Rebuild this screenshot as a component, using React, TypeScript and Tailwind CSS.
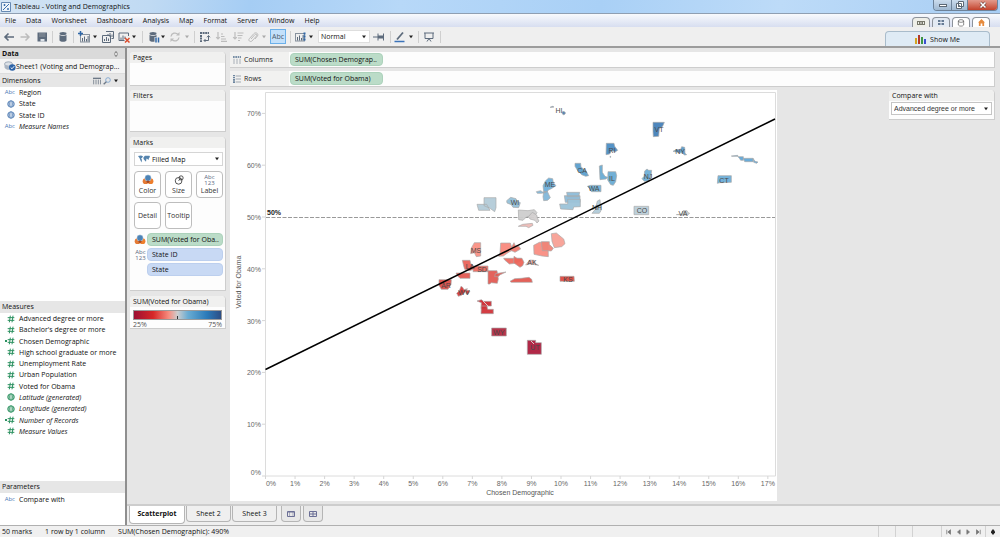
import type { ReactNode } from "react";
import clsx from "clsx";

type FieldIcon = "abc" | "globe" | "hash" | "calcHash";

interface Field {
  name: string;
  icon: FieldIcon;
  generated?: boolean;
}

const menus = ["File", "Data", "Worksheet", "Dashboard", "Analysis", "Map", "Format", "Server", "Window", "Help"];

const dimensions: Field[] = [
  { name: "Region", icon: "abc" },
  { name: "State", icon: "globe" },
  { name: "State ID", icon: "globe" },
  { name: "Measure Names", icon: "abc", generated: true },
];

const measures: Field[] = [
  { name: "Advanced degree or more", icon: "hash" },
  { name: "Bachelor's degree or more", icon: "hash" },
  { name: "Chosen Demographic", icon: "calcHash" },
  { name: "High school graduate or more", icon: "hash" },
  { name: "Unemployment Rate", icon: "hash" },
  { name: "Urban Population", icon: "hash" },
  { name: "Voted for Obama", icon: "hash" },
  { name: "Latitude (generated)", icon: "globe", generated: true },
  { name: "Longitude (generated)", icon: "globe", generated: true },
  { name: "Number of Records", icon: "calcHash", generated: true },
  { name: "Measure Values", icon: "hash", generated: true },
];

function Caret({ dim }: { dim?: boolean }) {
  return (
    <svg viewBox="0 0 6 4" className={clsx("h-1 w-1.5 shrink-0", dim ? "text-[#aaa]" : "text-[#222]")}>
      <path d="M1 .5h4L3 3.2z" fill="currentColor" />
    </svg>
  );
}

function Separator({ className }: { className: string }) {
  return (
    <span className={clsx("flex items-center justify-center", className)}>
      <span className="h-3 w-px bg-[#cfcfcf]" />
    </span>
  );
}

function Tool({ label, className, dim, children }: { label: string; className: string; dim?: boolean; children: ReactNode }) {
  return (
    <button type="button" aria-label={label} className={clsx("flex items-center justify-center", dim ? "text-[#bcbcbc]" : "text-[#5d6b7c]", className)}>
      {children}
    </button>
  );
}

function DropTool({ label, dim }: { label: string; dim?: boolean }) {
  return (
    <button type="button" aria-label={label} className="flex w-1.5 items-center justify-center">
      <Caret dim={dim} />
    </button>
  );
}

function Glyph({ children, className = "size-3" }: { children: ReactNode; className?: string }) {
  return (
    <svg viewBox="0 0 12 12" className={clsx("shrink-0", className)} fill="none" stroke="currentColor">
      {children}
    </svg>
  );
}

function Cylinder() {
  return (
    <g stroke="none" fill="currentColor">
      <ellipse cx="6" cy="2.6" rx="3.5" ry="1.5" />
      <path d="M2.5 3.8c1 1.4 6 1.4 7 0v5.6c-1 1.8-6 1.8-7 0z" />
    </g>
  );
}

function Bars() {
  return (
    <g stroke="none" fill="currentColor">
      <path d="M1 2h10v8.500H1zM2 3v6.500h8V3z" fillRule="evenodd" opacity=".7" />
      <path d="M3 6h1v3.500H3zM5 4.500h1v5H5zM7 7h1v2.500H7zM8.600 4h1v5.500h-1z" />
    </g>
  );
}

function Toolbar() {
  return (
    <div className="flex h-[19px] shrink-0 items-stretch justify-between border-b-2 border-[#9c9c9c] bg-[#efefef] pl-px box-content">
      <div className="flex items-stretch">
        <Tool label="Back" className="w-4">
          <Glyph><path d="M11 6H2M5.500 2.500 2 6l3.500 3.500" strokeWidth="1.600" /></Glyph>
        </Tool>
        <Tool label="Forward" className="w-4" dim>
          <Glyph><path d="M1.500 6h8.500M6.500 2.500 10 6 6.500 9.500" strokeWidth="1.500" /></Glyph>
        </Tool>
        <Tool label="Save" className="w-[18px]">
          <Glyph>
            <path d="M1.500 1.500h9.500v9H1.500z" fill="currentColor" stroke="none" />
            <path d="M3 2h6.500v4H3z" fill="#76818e" stroke="none" />
            <path d="M4.500 8h4v2.500h-4z" fill="#dde2e8" stroke="none" />
          </Glyph>
        </Tool>
        <Separator className="w-[3px]" />
        <Tool label="Connect to data" className="w-[18px]"><Glyph><Cylinder /></Glyph></Tool>
        <Separator className="w-[3px]" />
        <Tool label="New worksheet" className="w-[17px]">
          <Glyph className="h-3 w-3.5">
            <g transform="translate(1 1)"><Bars /></g>
            <path d="M0 2.500h5M2.500 0v5" stroke="#2f67a8" strokeWidth="1.500" />
          </Glyph>
        </Tool>
        <DropTool label="New worksheet options" />
        <Tool label="Duplicate sheet" className="w-[19px]">
          <Glyph>
            <path d="M4 .5h7.500v7H9.500M6 5V3M8 6V2M10 6V3.500" />
            <path d="M.5 4.500h8v7h-8zM2.500 10V8M4.500 10V6M6.500 10V7.500" />
          </Glyph>
        </Tool>
        <Tool label="Clear sheet" className="w-3.5">
          <Glyph>
            <path d="M10.500 5V2H1v7.500h5.500M3 9V6.500M5 9V4.500M7 8V5.500" />
            <path d="m7 7 4.500 4.500M11.500 7 7 11.500" stroke="#d94a2b" strokeWidth="1.500" />
          </Glyph>
        </Tool>
        <DropTool label="Clear options" />
        <Separator className="w-[11px]" />
        <Tool label="Pause auto updates" className="w-3">
          <Glyph>
            <g transform="translate(-1 0)"><Cylinder /></g>
            <path d="M6.500 6h5v6h-5z" fill="#efefef" stroke="none" />
            <path d="M8 6.500v5M10.500 6.500v5" stroke="#2f67a8" strokeWidth="1.500" />
          </Glyph>
        </Tool>
        <DropTool label="Update options" />
        <Tool label="Run update" className="w-[18px]" dim>
          <Glyph>
            <path d="M2 5.500a4 4 0 0 1 7-2M10 6.500a4 4 0 0 1-7 2" strokeWidth="1.300" />
            <path d="M10.500 1v3.500H7zM1.500 11V7.500H5z" fill="currentColor" stroke="none" />
          </Glyph>
        </Tool>
        <DropTool label="Run options" dim />
        <Separator className="w-2" />
        <Tool label="Swap rows and columns" className="w-3.5">
          <Glyph>
            <path d="M1 2h9M2 4v7" strokeWidth="2" strokeDasharray="2 .6" />
            <path d="M9.500 5v4.500H5M8 6.300l1.500-1.800L11 6.300M6.500 8 5 9.500 6.500 11" />
          </Glyph>
        </Tool>
        <Tool label="Sort ascending" className="w-[18px]" dim>
          <Glyph><path d="M3 1v7M1.200 6.200 3 8l1.800-1.800M6 3h2M6 5.500h3.500M6 8h5M6 10.300h6" strokeWidth="1.200" /></Glyph>
        </Tool>
        <Tool label="Sort descending" className="w-4" dim>
          <Glyph><path d="M3 1v7M1.200 6.200 3 8l1.800-1.800M5.500 2h6M5.500 4.500h5M6 7h3.500M6 9.500h2" strokeWidth="1.200" /></Glyph>
        </Tool>
        <Tool label="Group" className="w-3.5" dim>
          <Glyph><path d="m4 8 4-4.500c1-1 2.500.2 1.600 1.400L5 10C3.400 11.500.8 9.500 2.300 7.700l4.500-5C8.600.7 12 2.500 10.500 5L8 8" /></Glyph>
        </Tool>
        <span className="flex w-2 items-center justify-center"><Caret dim /></span>
        <button type="button" aria-pressed="true" className="mx-0.5 my-0.5 flex w-4 items-center justify-center border border-[#6bb0ea] bg-[#c3e0fa] text-[#4c5a6b]">
          Abc
        </button>
        <Separator className="w-1" />
        <Tool label="View cards" className="w-4">
          <Glyph className="h-3 w-3.5">
            <Bars />
            <path d="M10.500 1.500v9" stroke="#2f67a8" strokeWidth="2" strokeDasharray="2 1" />
          </Glyph>
        </Tool>
        <DropTool label="View card options" />
        <SelectBox label="Fit" value="Normal" className="my-[3px] ml-1 w-[52px] border-[#dedede]" />
        <Tool label="Fix axes" className="w-[18px]">
          <Glyph><path d="M0 6h5M5 2.500v7M10.500 2.500v7" /><path d="M5 4.500h5.500v3H5z" fill="currentColor" stroke="none" /></Glyph>
        </Tool>
        <Separator className="w-1" />
        <Tool label="Highlight" className="w-4">
          <Glyph><path d="m3 8.500 6-7" strokeWidth="1.800" /><path d="M.5 10.500h10" stroke="#3b73b9" strokeWidth="1.500" /></Glyph>
        </Tool>
        <DropTool label="Highlight options" />
        <Separator className="w-2" />
        <Tool label="Presentation mode" className="w-3.5">
          <Glyph><path d="M1 2h10M2 2v5.500h8V2M4 10.500l2-3 2 3" /></Glyph>
        </Tool>
        <Separator className="w-2" />
      </div>
      <button type="button" className="mr-2.5 mt-1 flex w-[105px] items-center justify-center gap-1 rounded-t-sm border border-b-0 border-[#a9bccb] bg-[#dfebf5]">
        <svg viewBox="0 0 11 9" className="h-[9px] w-[11px]">
          <path d="M0 3h2v6H0z" fill="#d3a521" />
          <path d="M3 0h2v9H3z" fill="#b5392a" />
          <path d="M6 2h2v7H6z" fill="#3c9446" />
          <path d="M9 4h2v5H9z" fill="#3b4fd0" />
        </svg>
        Show Me
      </button>
    </div>
  );
}

function SelectBox({ label, value, className, icon }: { label: string; value: string; className?: string; icon?: ReactNode }) {
  return (
    <span className={clsx("relative flex items-center border bg-white", className)}>
      {icon}
      <select aria-label={label} defaultValue={value} className="h-full w-full appearance-none bg-transparent pl-0.5 leading-[11px] outline-none">
        <option>{value}</option>
      </select>
      <span className="pointer-events-none absolute inset-y-0 right-0.5 flex items-center"><Caret /></span>
    </span>
  );
}

function TypeIcon({ icon }: { icon: FieldIcon }) {
  if (icon === "abc") return <span className="text-[6px] text-[#4a78b5]">Abc</span>;
  if (icon === "globe") {
    return (
      <Glyph className="size-2">
        <circle cx="6" cy="6" r="4.800" strokeWidth="1.500" />
        <path d="M1 4.500h10M1 7.500h10" strokeWidth="1" />
        <ellipse cx="6" cy="6" rx="2.200" ry="4.800" strokeWidth="1" />
      </Glyph>
    );
  }
  return (
    <span className="flex items-center">
      {icon === "calcHash" && <span className="size-0.5 bg-current" />}
      <Glyph className="size-2">
        <path d="M1 4h10M1 8h10M5 1 3.500 11M9 1 7.500 11" strokeWidth="1.500" />
      </Glyph>
    </span>
  );
}

function FieldList({ fields, measure, className }: { fields: Field[]; measure?: boolean; className?: string }) {
  return (
    <ul className={clsx("flex flex-col", className)}>
      {fields.map((f) => (
        <li key={f.name} className="flex flex-1 items-center gap-1">
          <span className={clsx("flex w-[15px] shrink-0 justify-end", measure ? "text-[#2c9160]" : "text-[#5580b5]")}>
            <TypeIcon icon={f.icon} />
          </span>
          <span className={clsx("whitespace-nowrap", f.generated && "italic")}>{f.name}</span>
        </li>
      ))}
    </ul>
  );
}

function DataPane() {
  return (
    <aside className="flex w-[127px] shrink-0 flex-col border-r-2 border-[#8f8f8f] bg-white">
      <div className="flex h-[11px] items-center justify-between bg-[#dadada] pl-0.5 pr-1.5 font-bold">
        Data
        <Glyph className="size-1.5"><path d="M3 5 6 1l3 4M3 7l3 4 3-4" /></Glyph>
      </div>
      <div className="flex h-[15px] items-center border-b border-[#ddd] bg-[#f4f4f4] pl-1">
        <svg viewBox="0 0 12 10" className="h-2.5 w-3 shrink-0">
          <ellipse cx="4.500" cy="3" rx="4" ry="2.200" fill="#dce1e7" stroke="#8391a3" strokeWidth=".7" />
          <path d="M.5 3v3.500c1 2 3 2.500 5 2.300V5.200C3 5.600 1 4.500.5 3z" fill="#a9b4c2" />
          <circle cx="8.300" cy="6.500" r="3.300" fill="#2b62a7" />
          <path d="m6.700 6.500 1.300 1.300 2.200-2.600" fill="none" stroke="#fff" strokeWidth=".9" />
        </svg>
        <span className="whitespace-nowrap">Sheet1 (Voting and Demograp...</span>
      </div>
      <div className="flex h-[13px] items-center bg-[#e6e6e6] pl-0.5 pr-1.5">
        <span className="flex-1">Dimensions</span>
        <span className="flex items-center gap-0.5 text-[#6d7886]">
          <Glyph className="size-2"><path d="M0 2h12" strokeWidth="2" /><path d="M1 4v7M4.500 4v7M8 4v7M11.300 4v7" strokeWidth="1.200" /></Glyph>
          <Glyph className="size-2"><circle cx="7.500" cy="4.500" r="3.500" stroke="#5d91c8" /><path d="m5 7-4 4" strokeWidth="2" /></Glyph>
          <Caret />
        </span>
      </div>
      <FieldList fields={dimensions} className="h-[45px] shrink-0" />
      <div className="flex-1" />
      <div className="h-3 bg-[#e6e6e6] pl-0.5 leading-[11px]">Measures</div>
      <FieldList fields={measures} measure className="h-[124px] shrink-0" />
      <div className="h-11 shrink-0" />
      <div className="h-3 bg-[#e6e6e6] pl-0.5 leading-3">Parameters</div>
      <FieldList fields={[{ name: "Compare with", icon: "abc" }]} className="mb-5 h-3 shrink-0" />
    </aside>
  );
}

function Card({ title, className, children }: { title: string; className?: string; children?: ReactNode }) {
  return (
    <section className={clsx("rounded-t-sm border-b border-r border-[#cdcdcd] bg-[#fdfdfd]", className)}>
      <h2 className="rounded-t-sm bg-[#f0f0ef] pl-[3px] leading-[11px]">{title}</h2>
      {children}
    </section>
  );
}

function Pill({ children, dimension }: { children: ReactNode; dimension?: boolean }) {
  return (
    <button
      type="button"
      className={clsx("block h-[13px] w-full whitespace-nowrap rounded-sm border pl-1 text-left leading-[11px]", dimension ? "border-[#bccfee] bg-[#c8d9f4]" : "border-[#acd2bb] bg-[#bbdcc8]")}
    >
      {children}
    </button>
  );
}

function ColorIcon() {
  return (
    <svg viewBox="0 0 12 11" className="h-[11px] w-3 shrink-0">
      <circle cx="3.600" cy="7.200" r="2.900" fill="#e47a34" />
      <circle cx="8.500" cy="7.200" r="2.900" fill="#ee7e2c" />
      <circle cx="6" cy="4" r="3.200" fill="#4d83b5" stroke="#fff" strokeWidth=".4" />
      <path d="m4 7.800 2-1.500 2 1.500-2 1.500z" fill="#a64a23" />
    </svg>
  );
}

function LabelIcon() {
  return (
    <span className="block text-center text-[6px] leading-[6px] text-[#5b6a80]">
      Abc
      <br />
      123
    </span>
  );
}

function MarkButton({ label, children }: { label: string; children?: ReactNode }) {
  return (
    <button type="button" className="flex h-[27px] w-[27px] flex-col items-center justify-center rounded-sm border border-[#bdbdbd] bg-white text-[#333]">
      {children && <span className="flex h-3 items-center">{children}</span>}
      <span className="leading-[10px]">{label}</span>
    </button>
  );
}

function ShelfCards() {
  return (
    <div className="flex w-24 shrink-0 flex-col">
      <Card title="Pages" className="h-[34px]" />
      <Card title="Filters" className="mt-1 h-[42px]" />
      <Card title="Marks" className="mt-[5px] h-[154px]">
        <div className="pl-1 pr-0.5 pt-1">
          <SelectBox
            label="Mark type"
            value="Filled Map"
            className="h-3.5 border-[#d5d5d5] pl-[3px]"
            icon={
              <svg viewBox="0 0 12 8" className="h-2 w-3 shrink-0" fill="#5483ad">
                <path d="M0 1 3 .5l2 .8L4 3 3 3.500l1 1.300L3.500 7.500 2.300 5 1.500 3zM5.500 2.200 7 .8h4.500L12 2l-1 1-.5 2L9.300 4 8.500 3.500 8 6.800 6.800 5.500 5.500 4z" />
              </svg>
            }
          />
          <div className="mt-[5px] grid grid-cols-[repeat(3,27px)] justify-between gap-y-1">
            <MarkButton label="Color"><ColorIcon /></MarkButton>
            <MarkButton label="Size">
              <Glyph className="size-2.5"><circle cx="5.500" cy="7" r="4" /><circle cx="8.500" cy="3.500" r="2.500" /><path d="M5.500 7 8 4" /></Glyph>
            </MarkButton>
            <MarkButton label="Label"><LabelIcon /></MarkButton>
            <MarkButton label="Detail" />
            <MarkButton label="Tooltip" />
          </div>
          <div className="mt-1 grid grid-cols-[13px_1fr] items-center gap-y-0.5">
            <ColorIcon />
            <Pill>SUM(Voted for Oba..</Pill>
            <LabelIcon />
            <Pill dimension>State ID</Pill>
            <span />
            <Pill dimension>State</Pill>
          </div>
        </div>
      </Card>
      <Card title="SUM(Voted for Obama)" className="mt-[5px] h-[33px]">
        <div className="px-[3px] pt-[3px]">
          <div className="flex h-2.5 items-end justify-center border border-[#999] bg-[linear-gradient(90deg,#9c1033,#d62728_22%,#f78d7f_40%,#cdcdcd_50%,#69acd3_62%,#2a7ab9_84%,#2c4e85)]">
            <span className="h-[3px] w-px bg-[#333]" />
          </div>
          <div className="flex justify-between leading-[9px] text-[#555]">
            <span>25%</span>
            <span>75%</span>
          </div>
        </div>
      </Card>
    </div>
  );
}

function Shelf({ label, vertical, children }: { label: string; vertical?: boolean; children: ReactNode }) {
  return (
    <div className="flex h-4 items-center border-b border-r border-[#cdcdcd] bg-[#fdfdfd]">
      <div className="flex h-full w-[59px] shrink-0 items-center gap-[3px] bg-[#f1f1f0] pl-[3px] text-[#85909c]">
        <Glyph className={clsx("size-2", vertical && "-rotate-90")}>
          <path d="M0 1.500h12" stroke="#52708f" strokeWidth="2.500" strokeDasharray="2.500 1" />
          <path d="M1.500 4v8M6 4v8M10.500 4v8" strokeWidth="2" opacity=".5" />
        </Glyph>
        <span className="text-[#222]">{label}</span>
      </div>
      <div className="ml-px w-[93px]">{children}</div>
    </div>
  );
}

// Chart space: the origin of the percent scales sits at (265, 476).
const xAt = (pct: number) => 265.5 + pct * 29.55;
const yAt = (pct: number) => 476 - pct * 5.18;

// State outlines, in thirds of a chart unit, grouped by the corner they are measured from.
const outlines: { origin: [number, number]; shapes: [string, string][] }[] = [
  {
    origin: [420, 95],
    shapes: [
      ["#4f7fb0", "M390 37l8-3 4 2-6 1zM426 51l6-2 5 5-5 6-5-3z"],
      ["#5b9fcf", "M465 205h17l1 11 15 12 8 14-9 2-12-5-12-12-8-13z"],
      ["#6fafd9", "M369 272l7-14 10-9 12 2 2 12 8 9-14 9-9 4-7 12-7-8z"],
      ["#82b7d9", "M349 290l13-3 6 4 8-2 1 4-14 2-11 0zM371 292l11-3 5 11 4 8-8 8-12 1-2-12z"],
      ["#b3cbd8", "M171 328h29l10 18h-34zM192 308h36v30l-4 12-14-10-18-8z"],
      ["#94c0d8", "M260 317l12-10 16 4 3 7 10 5-5 15-17-1-5-8-13-5z"],
      ["#8dbcd8", "M440 292h39l-3 13h-34zM433 302h47v20h-44z"],
      ["#9cc3d8", "M419 327h24v-14h38v22l-20 1-2 8-37-2z"],
      ["#cdcdcd", "M295 345l29 2 19-3 8 9-5 7-12 3-14 2-11 11-13-2z"],
      ["#d3d0d0", "M325 365l12-13 13 8 3 11 4 7-6 6-6-8-15-4z"],
      ["#eebbb6", "M295 394l13-6 29-3 2 6-13 7-8-4z"],
    ],
  },
  {
    origin: [580, 95],
    shapes: [
      ["#4481b9", "M219 82h34l-5 12-10 7-2 23-16 1-1-16z"],
      ["#4b8dc4", "M79 145h23l2 9 9 12-8 5-9-5-7 11-11 2zM90 184h2v3h-2z"],
      ["#5b9ccc", "M279 169l9-5 14-1 3-8 9 2 1 18 5 4-6 1-8-6-17-3z"],
      ["#69acd4", "M58 213l9-3 0 22 8 12 8 3-5 5-18 2z"],
      ["#69acd4", "M84 230h23l3 12-3 18-7 11-8-2-9-14z"],
      ["#6eaed5", "M194 228l7-6 5 4h9l-3 24-8 8-11 1-7-8 6-7z"],
      ["#72b3da", "M22 274l10-3h31v19H34l-5-9z"],
      ["#62a8d7", "M454 183l19-2 1 4h16v11h-8l-3-5-6-7h-17zM490 190h29v10h-25zM519 190l6 9 9 2-4 4-9-3z"],
      ["#6daed8", "M414 242h40v20l-34 1-8 2z"],
      ["#b1cbd9", "M36 355l10-12 6-25 8-4 3 33-5 8z"],
      ["#b9cdd8", "M162 334h44v25h-44z"],
      ["#c9ced1", "M289 359l17-2 3-10h12l3 6 5 2-6 5z"],
    ],
  },
  {
    origin: [420, 215],
    shapes: [
      ["#f8a095", "M394 56l15-2 22 18 4 14-10 9-22 3-7-19z"],
      ["#f98d82", "M341 91l17-9h26l1 43-19-2-24-5z"],
      ["#ef8477", "M364 80h24v8l12 12-6 8-15-1h-12z"],
      ["#f9897d", "M242 84h29l7 21-14 8-14 10-14 1 4-10z"],
      ["#ef7a6f", "M270 105l12-22 4 9 11 2 5 8-17 10z"],
      ["#fa9084", "M154 99l9-16h19v40l-13 2-6-12-11 3z"],
      ["#ee6b61", "M251 130h53v8l-18 7-18 2-14-12z"],
      ["#ec665b", "M282 124l9 6h15l6 12-4 10-8 5-11-8-8-6z"],
      ["#edb0aa", "M317 150l12-15 14 1 3 10 10 5-12-2-10-3z"],
      ["#ea6258", "M127 136h23l2 10 6 3 5 13-14 5-15-4-3-10z"],
      ["#ec695f", "M160 153h44v17h-45z"],
      ["#e35a52", "M108 174h42v16h-30l-8-8z"],
      ["#e15b53", "M204 167h27l4 25-3 13-19-2-3 4h-6z"],
      ["#df5e55", "M226 176l32-5-17 8-7 6h-10z"],
      ["#e35850", "M270 199l14-8 19-1 24-3 8 6 2 9h-63z"],
      ["#e04940", "M420 184h42l1 15h-43z"],
      ["#de4c46", "M57 194h37l-1 15-9 14H64l-7-12z"],
      ["#d73736", "M110 235l8-8 5-13 5 3 4 7 10-3-7 11-11 9-9 3zM137 224l13 4-6 10-6-2z"],
      ["#cf2a31", "M171 258l13-4 7 5h23v14h-13l-6 8h-12l1-18z"],
      ["#d13339", "M184 273h17l2 10h17v13h-37z"],
      ["#b3283f", "M215 339h44v24h-44z"],
      ["#ad1c3d", "M322 376h25v7h17v35h-42z"],
    ],
  },
];

// Pale borders that run inside the darkest shapes.
const innerBorders = "M483 301l5 5M531 341l3 3";

const stateLabels: [string, number, number][] = [
  ["HI", 559, 113], ["CA", 582, 173], ["ME", 550, 187], ["WI", 515, 205], ["VT", 659, 132], ["RI", 612, 153],
  ["NY", 680, 154], ["IL", 612, 181], ["NJ", 648, 179], ["WA", 594, 191], ["CT", 724, 183], ["NH", 597, 210],
  ["CO", 642, 213], ["VA", 683, 216], ["MS", 476, 253], ["LA", 470, 269], ["SD", 482, 272], ["AK", 532, 265],
  ["KS", 568, 282], ["AR", 446, 288], ["WV", 464, 295], ["WY", 499, 335], ["UT", 535, 350],
];

function Scatterplot() {
  return (
    <svg viewBox="230 90 547 411" role="img" aria-label="Voted for Obama by Chosen Demographic" className="block w-full bg-white font-['Liberation_Sans',sans-serif] text-[7px]">
      <path d="M265.500 476V92.500h510V476z" fill="none" stroke="#dcdcdc" />
      {[0, 10, 20, 30, 40, 50, 60, 70].map((v) => (
        <g key={v}>
          <path d={`M262 ${yAt(v)}h3`} stroke="#d5d5d5" />
          <text x="261" y={v === 0 ? 475 : yAt(v) + 3} textAnchor="end" fill="#666">{v}%</text>
        </g>
      ))}
      {Array.from({ length: 18 }, (_, v) => (
        <g key={v}>
          <path d={`M${xAt(v)} 476v3`} stroke="#d5d5d5" />
          <text x={v === 0 ? 271 : xAt(v)} y="486" textAnchor="middle" fill="#666">{v}%</text>
        </g>
      ))}
      <text x="520" y="495" textAnchor="middle" fill="#555">Chosen Demographic</text>
      <text transform="translate(241 282) rotate(-90)" textAnchor="middle" fill="#555">Voted for Obama</text>
      <path d="M266 217.500h509" stroke="#999" strokeDasharray="4 1.500" />
      <text x="267" y="215" fontWeight="bold" fill="#222">50%</text>
      {outlines.map(({ origin: [x, y], shapes }) => (
        <g key={`${x}-${y}`} transform={`translate(${x} ${y}) scale(${1 / 3})`} stroke="#a9a9a9" strokeWidth="2" strokeLinejoin="round">
          {shapes.map(([fill, d]) => (
            <path key={d} d={d} fill={fill} fillOpacity=".95" />
          ))}
        </g>
      ))}
      <path d={innerBorders} stroke="#d9c9c9" />
      {stateLabels.map(([id, x, y]) => (
        <text key={id} x={x} y={y} textAnchor="middle" fill="#4a4a4a">{id}</text>
      ))}
      <path d="M265.500 369.500 775 119" stroke="#000" strokeWidth="1.500" />
    </svg>
  );
}

function SheetTabs() {
  return (
    <nav className="flex h-[21px] shrink-0 items-start border-t-2 border-[#cdcdcd] bg-[#efefef] pl-0.5">
      <a href="#scatterplot" className="h-[18px] w-14 rounded-b-sm border border-t-0 border-[#b5b5b5] bg-white text-center font-bold leading-4">Scatterplot</a>
      <a href="#sheet-2" className="ml-px h-4 w-[45px] rounded-b-sm border border-t-0 border-[#b5b5b5] text-center leading-4">Sheet 2</a>
      <a href="#sheet-3" className="ml-px h-4 w-[45px] rounded-b-sm border border-t-0 border-[#b5b5b5] text-center leading-4">Sheet 3</a>
      <button type="button" aria-label="New worksheet" className="ml-1 flex h-4 w-5 items-center justify-center rounded-b-sm border border-t-0 border-[#b5b5b5] bg-[#e8e8e8] text-[#6b6f96]">
        <svg viewBox="0 0 8 6" className="h-1.5 w-2" fill="none" stroke="currentColor"><path d="M.5.5h7v5h-7z" /><path d="M2.500 1v4M6 1v4M1 1.500h6" strokeOpacity=".5" /></svg>
      </button>
      <button type="button" aria-label="New dashboard" className="ml-0.5 flex h-4 w-5 items-center justify-center rounded-b-sm border border-t-0 border-[#b5b5b5] bg-[#e8e8e8] text-[#6b6f96]">
        <svg viewBox="0 0 8 6" className="h-1.5 w-2" fill="none" stroke="currentColor"><path d="M.5.5h7v5h-7zM4 .5v5M.5 3h7" /></svg>
      </button>
    </nav>
  );
}

function StatusBar() {
  return (
    <footer className="flex h-3 shrink-0 items-stretch justify-between border-t border-[#b0b0b0] bg-[#f0f0f0] leading-[11px]">
      <div className="flex gap-[13px] pl-0.5">
        <span>50 marks</span>
        <span>1 row by 1 column</span>
        <span>SUM(Chosen Demographic): 490%</span>
      </div>
      <div className="flex items-stretch text-[#777]">
        <span className="w-[17px] border-l border-[#d2d2d2]" />
        <span className="w-[17px] border-l border-[#d2d2d2]" />
        <span className="w-[29px] border-l border-[#d2d2d2]" />
        <span className="flex w-11 items-center justify-around border-l border-[#d2d2d2] px-0.5">
          {["M1 1v6M6 1v6L2.500 4z", "M5.500 1v6L2 4z", "M2.500 1v6L6 4z", "M7 1v6M2 1v6l3.500-3z"].map((d) => (
            <button type="button" key={d} aria-label="Go to record">
              <svg viewBox="0 0 8 8" className="size-1.5" fill="currentColor" stroke="currentColor"><path d={d} /></svg>
            </button>
          ))}
        </span>
        <span className="flex w-[15px] items-center justify-center border-l border-[#d2d2d2] text-[#222]">
          <svg viewBox="0 0 6 6" className="size-1.5" fill="currentColor"><path d="M3 0l2 2.500v1L3 6 1 3.500v-1z" /></svg>
        </span>
      </div>
    </footer>
  );
}

function TitleBar() {
  return (
    <header className="flex h-[13px] shrink-0 items-start justify-between bg-[linear-gradient(100deg,#d3e4f4,#c0daf3_15%,#a5cdf4_25%,#b7d8f8_40%,#a9d0f6_60%,#bddbf8_78%,#a8cef4)] pl-px pr-0.5">
      <div className="flex h-full items-center gap-[3px]">
        <svg viewBox="0 0 10 10" className="size-2.5">
          <path d="M.5.5h9v9h-9z" fill="#eef4fa" stroke="#6689b3" />
          <path d="M2 8 8 2M2.500 3h2M3.500 2v2M6 7h2M7 6v2" stroke="#3c70ad" />
        </svg>
        <span>Tableau - Voting and Demographics</span>
      </div>
      <div className="flex h-[11px] overflow-hidden rounded-b-sm border border-t-0 border-[#6d8299] text-white">
        <button type="button" aria-label="Minimize" className="flex w-[17px] items-center justify-center bg-linear-to-b from-[#cbdced] to-[#9fb8d1]">
          <span className="h-px w-1.5 border border-[#5c6875] bg-white box-content" />
        </button>
        <button type="button" aria-label="Restore" className="flex w-[17px] items-center justify-center border-x border-[#6d8299] bg-linear-to-b from-[#cbdced] to-[#9fb8d1]">
          <svg viewBox="0 0 8 8" className="size-2" fill="#fff" stroke="#5c6875"><path d="M2.500.5h5v5h-5zM.5 2.500h5v5h-5zM2.500 4.500h1v1h-1z" /></svg>
        </button>
        <button type="button" aria-label="Close" className="flex w-[29px] items-center justify-center bg-linear-to-b from-[#e29a8c] to-[#c2402a]">
          <svg viewBox="0 0 8 8" className="size-2"><path d="m1.500 1.500 5 5m0-5-5 5" stroke="#64372f" strokeWidth="2.800" /><path d="m1.500 1.500 5 5m0-5-5 5" stroke="#fff" strokeWidth="1.600" /></svg>
        </button>
      </div>
    </header>
  );
}

function MenuBar() {
  const tab = "flex h-2.5 w-[18px] items-center justify-center rounded-t-sm border border-b-0 border-[#8d939b]";
  return (
    <div className="flex h-3.5 shrink-0 items-end justify-between border-t border-[#8f9fb2] bg-linear-to-b from-[#f8fafd] to-[#d7def0]">
      <nav className="flex h-full items-center gap-2.5 pl-[5px]">
        {menus.map((m) => (
          <button type="button" key={m}>{m}</button>
        ))}
      </nav>
      <div className="mr-2.5 flex gap-0.5">
        <button type="button" aria-label="Sheets" className={clsx(tab, "bg-[#efefe8] text-[#77776a]")}>
          <svg viewBox="0 0 8 4" className="h-1 w-2" fill="currentColor"><path d="M0 0h8v4H0zM1 1v2h1V1zM3.500 1v2h1V1zM6 1v2h1V1z" fillRule="evenodd" /></svg>
        </button>
        <button type="button" aria-label="Thumbnails" className={clsx(tab, "bg-[#e3eaf3] text-[#667b94]")}>
          <svg viewBox="0 0 6 5" className="h-[5px] w-1.5" fill="currentColor"><path d="M0 0h2.500v2H0zM3.500 0H6v2H3.500zM0 3h2.500v2H0zM3.500 3H6v2H3.500z" /></svg>
        </button>
        <button type="button" aria-label="Data source" className={clsx(tab, "bg-white text-[#555]")}>
          <Glyph className="size-2"><ellipse cx="6" cy="3" rx="4" ry="2" /><path d="M2 3v6c1 2.300 7 2.300 8 0V3" /></Glyph>
        </button>
        <button type="button" aria-label="Start page" className={clsx(tab, "bg-white text-[#e58a3c]")}>
          <svg viewBox="0 0 8 8" className="size-[7px]" fill="currentColor"><path d="m4 0 4 4H7v4H5V5H3v3H1V4H0z" /></svg>
        </button>
      </div>
    </div>
  );
}

export default function App() {
  return (
    <div className="flex min-h-screen flex-col bg-[#e6e6e6] font-['Open_Sans',sans-serif] text-[7px] leading-[11px] text-[#111]">
      <TitleBar />
      <MenuBar />
      <Toolbar />
      <div className="flex flex-1 items-stretch">
        <DataPane />
        <div className="flex min-w-0 flex-1 flex-col">
          <main className="flex flex-1 gap-1 pb-0.5 pl-[3px] pt-1">
            <ShelfCards />
            <div className="flex min-w-0 flex-1 flex-col">
              <div className="flex flex-col gap-[3px] pr-[5px]">
                <Shelf label="Columns"><Pill>SUM(Chosen Demograp..</Pill></Shelf>
                <Shelf label="Rows" vertical><Pill>SUM(Voted for Obama)</Pill></Shelf>
              </div>
              <div className="mt-[3px] flex items-start">
                <div className="min-w-0 flex-1">
                  <Scatterplot />
                </div>
                <div className="flex w-[223px] shrink-0 justify-end pr-[5px]">
                  <Card title="Compare with" className="w-[106px] pb-1">
                    <SelectBox label="Compare with" value="Advanced degree or more" className="mx-0.5 mt-px h-[13px] border-[#c5c5c5] font-['Liberation_Sans',sans-serif] text-[#333]" />
                  </Card>
                </div>
              </div>
            </div>
          </main>
          <SheetTabs />
        </div>
      </div>
      <StatusBar />
    </div>
  );
}
